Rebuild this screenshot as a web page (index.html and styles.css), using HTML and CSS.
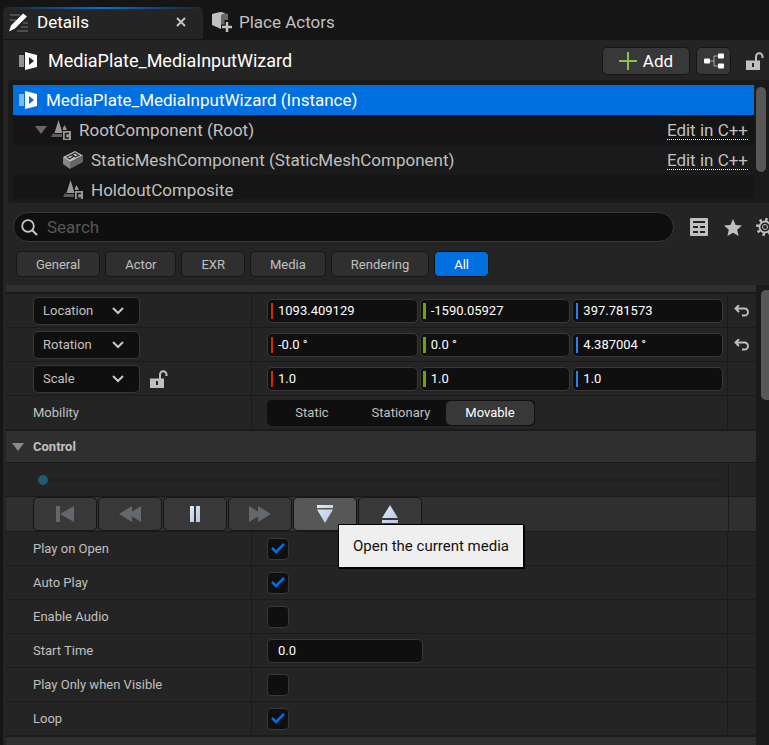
FILE: index.html
```html
<!DOCTYPE html>
<html lang="en">
<head>
  <meta charset="UTF-8" />
  <meta name="viewport" content="width=device-width, initial-scale=1.0"/>
  <title>Details</title>
  <link rel="stylesheet" href="styles.css">
</head>
<body>
  <!-- shared icons -->
  <svg class="sprite" width="0" height="0" aria-hidden="true">
    <symbol id="icon-plate" viewBox="0 0 19 18">
      <path d="M0 3h5v12H0z" fill="#fff" opacity=".5"/>
      <path fill="#fff" fill-rule="evenodd" d="M6 0l12 3v12L6 18zM10 5v8l5-4z"/>
    </symbol>
    <symbol id="icon-lock" viewBox="0 0 18 18">
      <path d="M10 9V4.500a3 3 0 0 1 6.500 0V6" fill="none" stroke="#c0c0c0" stroke-width="2"/>
      <path fill="#c0c0c0" fill-rule="evenodd" d="M0 8.500h14V18H0zM6 11v4h2v-4z"/>
    </symbol>
    <symbol id="icon-scene" viewBox="0 0 20 20">
      <path d="M7.500 0l4 13h-8zM13.500 5l2.500 5h-4v-2z" fill="#999"/>
      <path d="M2 13l-2 4h11v-3H3z" fill="#5c5c5c"/>
      <path d="M12 11h8v9h-8z" fill="#999"/>
      <path d="M18 13.500h-3.500v4.500H18" fill="none" stroke="#171717" stroke-width="1.500"/>
    </symbol>
    <symbol id="icon-reset" viewBox="0 0 16 12">
      <path d="M5 0L1.500 3.500 5 7M2 3.500h8.500a3.500 3.500 0 0 1 0 7H8" fill="none" stroke="#c0c0c0" stroke-width="1.900"/>
    </symbol>
    <linearGradient id="shine" x1="0" y1="0" x2="1" y2="1">
      <stop offset="0" stop-color="#dcecf4"/>
      <stop offset="1" stop-color="#b8c3e8"/>
    </linearGradient>
  </svg>

  <nav class="tabs">
    <div class="tab active">
      <button class="tab-name" type="button">
        <svg width="20" height="19" viewBox="0 0 20 19">
          <path d="M1 2h10M1 7h6M14 10h5M12 14h7M8 18h11" stroke="#777" stroke-width="1"/>
          <path d="M14 0.500l4 3L6 15.500 0 18.500l2-6z" fill="#fff"/>
        </svg>
        Details
      </button>
      <button class="tab-close" type="button" aria-label="Close Details">
        <svg width="10" height="10" viewBox="0 0 10 10"><path d="M1 1l8 8M9 1L1 9" stroke="#c8c8c8" stroke-width="1.800"/></svg>
      </button>
    </div>
    <div class="tab">
      <button class="tab-name" type="button">
        <svg width="20" height="20" viewBox="0 0 20 20">
          <path d="M8 0l8 2v9l-8 6z" fill="#686868"/>
          <path d="M0 2l8-2 5 1-4 2v14l-9-4z" fill="#c0c0c0"/>
          <path d="M15 8v12M9 15h11" stroke="#151515" stroke-width="5"/>
          <path d="M15 10v10M10 15h10" stroke="#c0c0c0" stroke-width="2.500"/>
        </svg>
        Place Actors
      </button>
    </div>
  </nav>

  <main class="panel">
    <header class="actor">
      <svg width="19" height="18"><use href="#icon-plate"/></svg>
      <h1>MediaPlate_MediaInputWizard</h1>
      <button class="btn add" type="button">
        <svg width="18" height="18" viewBox="0 0 18 18"><path d="M9 0v18M0 9h18" stroke="#8bc34a" stroke-width="2"/></svg>
        Add
      </button>
      <button class="btn blueprint" type="button" aria-label="Edit blueprint">
        <svg width="20" height="16" viewBox="0 0 20 16">
          <path d="M6 8h4M14 3h-4v10h4" fill="none" stroke="#aaa" stroke-width="1"/>
          <rect y="5.500" width="6" height="5" rx="1" fill="#fff"/>
          <rect x="14" y="0.500" width="6" height="5" rx="1" fill="#fff"/>
          <rect x="14" y="10.500" width="6" height="5" rx="1" fill="#fff"/>
        </svg>
      </button>
      <button class="icon-btn" type="button" aria-label="Lock selection">
        <svg width="18" height="18"><use href="#icon-lock"/></svg>
      </button>
    </header>

    <section class="tree">
      <ul>
        <li class="selected">
          <svg width="19" height="18"><use href="#icon-plate"/></svg>
          <span>MediaPlate_MediaInputWizard (Instance)</span>
        </li>
        <li class="root">
          <svg class="arrow" width="12" height="8" viewBox="0 0 12 8"><path d="M0 0h12L6 8z" fill="#686868"/></svg>
          <svg width="20" height="20"><use href="#icon-scene"/></svg>
          <span>RootComponent (Root)</span>
          <a href="#">Edit in C++</a>
        </li>
        <li class="child">
          <svg width="20" height="18" viewBox="0 0 20 18">
            <path d="M0 6l7 5v7l-7-5z" fill="#858585"/>
            <path d="M7 11l13-6v6L7 18z" fill="#666"/>
            <path d="M0 6l12-6 8 4.500L7 11z" fill="#c0c0c0"/>
            <path d="M4 6l4-2 2.500 1.500-4 2.500zM9 3.500l3-1.500 4 2.500-3.500 1.500z" fill="none" stroke="#333" stroke-width="1.300"/>
          </svg>
          <span>StaticMeshComponent (StaticMeshComponent)</span>
          <a href="#">Edit in C++</a>
        </li>
        <li class="child">
          <svg width="20" height="20"><use href="#icon-scene"/></svg>
          <span>HoldoutComposite</span>
        </li>
      </ul>
      <div class="tree-scroll"></div>
    </section>

    <div class="toolbar">
      <label class="search">
        <svg width="17" height="17" viewBox="0 0 17 17">
          <circle cx="7" cy="7" r="5.800" fill="none" stroke="#c8c8c8" stroke-width="1.800"/>
          <path d="M11 11l5 5" stroke="#c8c8c8" stroke-width="2"/>
        </svg>
        <input type="text" placeholder="Search" aria-label="Search">
      </label>
      <button class="icon-btn" type="button" aria-label="Property matrix">
        <svg width="18" height="18" viewBox="0 0 18 18">
          <rect width="18" height="18" rx="1" fill="#c0c0c0"/>
          <path d="M3 3h12v2H3zM3 8h5v2H3zM10 8h5v2h-5zM3 13h5v2H3zM10 13h5v2h-5z" fill="#242424"/>
        </svg>
      </button>
      <button class="icon-btn" type="button" aria-label="Favorites">
        <svg width="18" height="17" viewBox="0 0 18 17"><path d="M9 0l2.600 5.900 6.400.6-4.800 4.200 1.400 6.300L9 13.700 3.400 17l1.400-6.300L0 6.500l6.400-.6z" fill="#c0c0c0"/></svg>
      </button>
      <button class="icon-btn" type="button" aria-label="Settings">
        <svg width="18" height="18" viewBox="0 0 18 18">
          <circle cx="9" cy="9" r="7.500" fill="none" stroke="#c0c0c0" stroke-width="3" stroke-dasharray="2.400 3.490"/>
          <circle cx="9" cy="9" r="5.500" fill="none" stroke="#c0c0c0" stroke-width="1.800"/>
          <circle cx="9" cy="9" r="2.500" fill="none" stroke="#c0c0c0" stroke-width="1"/>
        </svg>
      </button>
    </div>

    <div class="filters">
      <button class="btn" type="button">General</button>
      <button class="btn" type="button">Actor</button>
      <button class="btn" type="button">EXR</button>
      <button class="btn" type="button">Media</button>
      <button class="btn" type="button">Rendering</button>
      <button class="btn on" type="button">All</button>
    </div>

    <div class="details">
      <div class="props">
        <div class="strip"></div>

        <div class="row">
          <div class="name">
            <select aria-label="Location type"><option>Location</option><option>Absolute Location</option></select>
          </div>
          <div class="value">
            <input class="num x" type="text" aria-label="Location X" value="1093.409129">
            <input class="num y" type="text" aria-label="Location Y" value="-1590.05927">
            <input class="num z" type="text" aria-label="Location Z" value="397.781573">
          </div>
          <div class="reset">
            <button class="icon-btn" type="button" aria-label="Reset location"><svg width="16" height="12"><use href="#icon-reset"/></svg></button>
          </div>
        </div>

        <div class="row">
          <div class="name">
            <select aria-label="Rotation type"><option>Rotation</option><option>Absolute Rotation</option></select>
          </div>
          <div class="value">
            <input class="num x" type="text" aria-label="Rotation X" value="-0.0 °">
            <input class="num y" type="text" aria-label="Rotation Y" value="0.0 °">
            <input class="num z" type="text" aria-label="Rotation Z" value="4.387004 °">
          </div>
          <div class="reset">
            <button class="icon-btn" type="button" aria-label="Reset rotation"><svg width="16" height="12"><use href="#icon-reset"/></svg></button>
          </div>
        </div>

        <div class="row">
          <div class="name">
            <select aria-label="Scale type"><option>Scale</option><option>Absolute Scale</option></select>
            <button class="icon-btn" type="button" aria-label="Lock scale"><svg width="18" height="18"><use href="#icon-lock"/></svg></button>
          </div>
          <div class="value">
            <input class="num x" type="text" aria-label="Scale X" value="1.0">
            <input class="num y" type="text" aria-label="Scale Y" value="1.0">
            <input class="num z" type="text" aria-label="Scale Z" value="1.0">
          </div>
          <div class="reset"></div>
        </div>

        <div class="row">
          <div class="name">Mobility</div>
          <div class="value">
            <div class="segments" role="radiogroup" aria-label="Mobility">
              <label><input type="radio" name="mobility">Static</label>
              <label><input type="radio" name="mobility">Stationary</label>
              <label><input type="radio" name="mobility" checked>Movable</label>
            </div>
          </div>
          <div class="reset"></div>
        </div>

        <h2 class="category">
          <svg width="12" height="8" viewBox="0 0 12 8"><path d="M0 0h12L6 8z" fill="#8a8a8a"/></svg>
          Control
        </h2>

        <div class="row wide">
          <div class="scrub"><input type="range" min="0" max="100" value="0" aria-label="Playback position"></div>
          <div class="reset"></div>
        </div>

        <div class="row wide transport">
          <div class="media">
            <button class="btn" type="button" aria-label="Rewind" disabled>
              <svg width="18" height="16" viewBox="0 0 18 16"><path d="M0 0h4v16H0zM18 0v16L4 8z"/></svg>
            </button>
            <button class="btn" type="button" aria-label="Reverse" disabled>
              <svg width="22" height="16" viewBox="0 0 22 16"><path d="M13 0v16L0 8zM22 0v16L9 8z"/></svg>
            </button>
            <button class="btn" type="button" aria-label="Pause">
              <svg width="10" height="16" viewBox="0 0 10 16"><path d="M0 0h4v16H0zM6 0h4v16H6z"/></svg>
            </button>
            <button class="btn" type="button" aria-label="Forward" disabled>
              <svg width="22" height="16" viewBox="0 0 22 16"><path d="M0 0l13 8-13 8zM9 0l13 8-13 8z"/></svg>
            </button>
            <div class="tip-holder">
              <button class="btn hover" type="button" aria-label="Open" aria-describedby="tip">
                <svg width="16" height="18" viewBox="0 0 16 18"><path d="M0 0h16v3H0zM0 4.500h16L8 18z"/></svg>
              </button>
              <div class="tooltip" id="tip" role="tooltip">Open the current media</div>
            </div>
            <button class="btn" type="button" aria-label="Close">
              <svg width="16" height="18" viewBox="0 0 16 18"><path d="M8 0l8 13H0zM0 15h16v3H0z"/></svg>
            </button>
          </div>
          <div class="reset"></div>
        </div>

        <div class="row">
          <label class="name" for="playOnOpen">Play on Open</label>
          <div class="value"><input type="checkbox" id="playOnOpen" checked></div>
          <div class="reset"></div>
        </div>
        <div class="row">
          <label class="name" for="autoPlay">Auto Play</label>
          <div class="value"><input type="checkbox" id="autoPlay" checked></div>
          <div class="reset"></div>
        </div>
        <div class="row">
          <label class="name" for="enableAudio">Enable Audio</label>
          <div class="value"><input type="checkbox" id="enableAudio"></div>
          <div class="reset"></div>
        </div>
        <div class="row">
          <label class="name" for="startTime">Start Time</label>
          <div class="value"><input class="num start" type="text" id="startTime" value="0.0"></div>
          <div class="reset"></div>
        </div>
        <div class="row">
          <label class="name" for="playVisible">Play Only when Visible</label>
          <div class="value"><input type="checkbox" id="playVisible"></div>
          <div class="reset"></div>
        </div>
        <div class="row">
          <label class="name" for="loop">Loop</label>
          <div class="value"><input type="checkbox" id="loop" checked></div>
          <div class="reset"></div>
        </div>
        <div class="category"></div>
      </div>
      <div class="details-scroll"></div>
    </div>
  </main>
</body>
</html>
```

FILE: styles.css
```css
* {
  box-sizing: border-box;
}

body {
  margin: 0;
  height: 100vh;
  overflow: hidden;
  display: flex;
  flex-direction: column;
  background: #151515;
  color: #c0c0c0;
  font-family: Roboto, "Liberation Sans", sans-serif;
  font-size: 13px;
}

button, input, select {
  font: inherit;
  color: inherit;
  margin: 0;
}

button {
  display: flex;
  align-items: center;
  justify-content: center;
  padding: 0;
  border: none;
  background: none;
  cursor: pointer;
}

svg {
  flex: none;
}

.sprite {
  position: absolute;
}

/* tabs */
.tabs {
  display: flex;
  flex: none;
  height: 40px;
  padding: 7px 0 1px 3px;
  font-size: 17px;
}

.tab {
  display: flex;
  align-items: center;
  justify-content: space-between;
  padding: 0 9px 2px;
}

.tab-name {
  gap: 7px;
}

.tab.active {
  width: 200px;
  padding: 0 17px 2px 6px;
  color: #fff;
  background: linear-gradient(to right, #242424, #0070e0, #242424) top / 100% 2px no-repeat #242424;
  border-radius: 5px 5px 0 0;
}

.tab.active .tab-name {
  gap: 8px;
}

.panel {
  flex: 1;
  min-height: 0;
  display: flex;
  flex-direction: column;
  margin-left: 3px;
  background: #242424;
}

/* actor header */
.actor {
  display: flex;
  align-items: center;
  flex: none;
  height: 40px;
  padding: 1px 5px 0 16px;
}

.actor h1 {
  flex: 1;
  margin: 0 0 0 10px;
  font-size: 18px;
  font-weight: normal;
  color: #fff;
}

.btn {
  border: 1px solid #151515;
  border-radius: 5px;
  background: #383838;
}

.add {
  width: 88px;
  height: 28px;
  gap: 6px;
  font-size: 17px;
  color: #fff;
}

.blueprint {
  width: 35px;
  height: 28px;
  margin: 0 15px 0 6px;
}

/* component tree */
.tree {
  display: flex;
  flex: none;
  gap: 2px;
  margin-left: 5px;
  padding: 5px 3px 4px 5px;
  background: #1a1a1a;
  border-radius: 4px 0 0 4px;
}

.tree ul {
  flex: 1;
  max-height: 114px;
  overflow: hidden;
  margin: 0;
  padding: 0;
  list-style: none;
  font-size: 17px;
}

.tree li {
  display: flex;
  align-items: center;
  height: 30px;
  padding: 0 6px;
  background: #151515;
}

.tree li:nth-child(odd) {
  background: #1a1a1a;
}

.tree li span {
  flex: 1;
  margin-left: 8px;
}

.tree li.selected {
  background: #0070e0;
  color: #fff;
}

.tree li.root {
  padding-left: 22px;
}

.tree li.child {
  padding-left: 50px;
}

.tree .arrow {
  margin-right: 4px;
}

.tree a {
  color: inherit;
  line-height: 18px;
  text-decoration: none;
  border-bottom: 1px dotted #fff;
}

.tree-scroll {
  width: 10px;
  height: 85px;
  margin-top: 2px;
  border-radius: 5px;
  background: #575757;
}

/* search */
.toolbar {
  display: flex;
  align-items: center;
  flex: none;
  gap: 16px;
  margin: 9px -3px 0 10px;
}

.toolbar .icon-btn + .icon-btn {
  margin-right: -2px;
}

.search {
  display: flex;
  align-items: center;
  flex: 1;
  height: 30px;
  padding: 0 7px;
  gap: 9px;
  border: 1px solid #383838;
  border-radius: 15px;
  background: #0f0f0f;
}

.search input {
  flex: 1;
  min-width: 0;
  padding: 0;
  border: none;
  outline: none;
  background: none;
  font-size: 17px;
}

.search input::placeholder {
  color: #575757;
}

/* category filters */
.filters {
  display: flex;
  flex: none;
  gap: 5px;
  margin: 9px 13px 8px;
}

.filters .btn {
  height: 26px;
  padding: 0 19px;
  background: #2f2f2f;
}

.filters .on {
  color: #fff;
  background: #0070e0;
}

/* property list */
.details {
  display: flex;
  flex: 1;
  min-height: 0;
  margin-left: 3px;
  background: #1a1a1a;
}

.props {
  flex: 1;
  overflow: hidden;
}

.strip {
  height: 9px;
  background: #2f2f2f;
  border-bottom: 2px solid #1a1a1a;
}

.row {
  display: grid;
  grid-template-columns: minmax(0, 246fr) minmax(0, 475fr) 29px;
  height: 34px;
  background: #242424;
  border-bottom: 1px solid #1a1a1a;
}

.row.wide {
  grid-template-columns: 1fr 28px;
}

.name {
  display: flex;
  align-items: center;
  gap: 10px;
  padding-left: 27px;
  border-right: 1px solid #1a1a1a;
}

.value {
  display: flex;
  align-items: center;
  gap: 2px;
  padding: 0 4px 0 15px;
}

.reset {
  display: flex;
  align-items: center;
  justify-content: center;
  border-left: 1px solid #1a1a1a;
}

select {
  width: 107px;
  height: 28px;
  padding: 0 9px;
  appearance: none;
  border: 1px solid #383838;
  border-radius: 5px;
  background: #0f0f0f url("data:image/svg+xml,%3Csvg xmlns='http://www.w3.org/2000/svg' width='12' height='8'%3E%3Cpath d='M1 1l5 5 5-5' fill='none' stroke='%23c8c8c8' stroke-width='2'/%3E%3C/svg%3E") no-repeat right 15px center;
}

.num {
  flex: 1;
  min-width: 0;
  height: 24px;
  padding: 0 10px;
  border: 1px solid #383838;
  border-radius: 5px;
  color: #fff;
  background: #0f0f0f;
}

.num.x {
  background: linear-gradient(#d42a00, #d42a00) 3px center / 2px 16px no-repeat #0f0f0f;
}

.num.y {
  background: linear-gradient(#6aa700, #6aa700) 2px center / 3px 16px no-repeat #0f0f0f;
}

.num.z {
  background: linear-gradient(#2e7df0, #2e7df0) 3px center / 2px 16px no-repeat #0f0f0f;
}

.num.start {
  flex: none;
  width: 156px;
}

.segments {
  display: flex;
  gap: 1px;
  height: 26px;
  padding: 1px;
  border-radius: 5px;
  background: #0f0f0f;
}

.segments label {
  display: flex;
  align-items: center;
  justify-content: center;
  width: 88px;
  border-radius: 5px;
}

.segments input {
  position: absolute;
  opacity: 0;
}

.segments label:has(:checked) {
  color: #fff;
  background: #383838;
}

.category {
  display: flex;
  align-items: center;
  gap: 9px;
  height: 33px;
  margin: 0;
  padding-left: 6px;
  font-size: 13px;
  font-weight: bold;
  background: #2f2f2f;
  border-top: 1px solid #1a1a1a;
  border-bottom: 1px solid #1a1a1a;
}

/* playback */
.scrub {
  display: flex;
  align-items: center;
  padding: 0 5px 0 32px;
}

input[type="range"] {
  width: 100%;
  height: 10px;
  appearance: none;
  background: none;
}

input[type="range"]::-webkit-slider-runnable-track {
  height: 4px;
  border-radius: 2px;
  background: #202020;
}

input[type="range"]::-webkit-slider-thumb {
  appearance: none;
  width: 10px;
  height: 10px;
  margin-top: -3px;
  border-radius: 50%;
  background: #1f5a73;
}

.row.transport {
  height: 35px;
  background: #2f2f2f;
}

.media {
  display: flex;
  gap: 1px;
  padding-left: 27px;
}

.media .btn {
  width: 64px;
  height: 34px;
  fill: url(#shine);
}

.media .btn:disabled {
  fill: #63676e;
}

.media .hover {
  background: #575757;
}

.tip-holder {
  position: relative;
}

.tooltip {
  position: absolute;
  z-index: 1;
  top: 27px;
  left: 45px;
  padding: 11px 14px;
  border: 1px solid #000;
  box-shadow: 1px 1px 0 #000;
  background: #efefef;
  color: #111;
  font-size: 15px;
  line-height: 20px;
  white-space: nowrap;
}

input[type="checkbox"] {
  width: 22px;
  height: 22px;
  appearance: none;
  border: 1px solid #383838;
  border-radius: 4px;
  background: #0f0f0f;
}

input[type="checkbox"]:checked {
  background: #0f0f0f url("data:image/svg+xml,%3Csvg xmlns='http://www.w3.org/2000/svg' width='14' height='11'%3E%3Cpath d='M1 5l4 4 8-8' fill='none' stroke='%230070e0' stroke-width='2.500'/%3E%3C/svg%3E") no-repeat center;
}

.details-scroll {
  width: 8px;
  height: 110px;
  margin: 5px 0 0 5px;
  border-radius: 5px 0 0 5px;
  background: #575757;
}
```
